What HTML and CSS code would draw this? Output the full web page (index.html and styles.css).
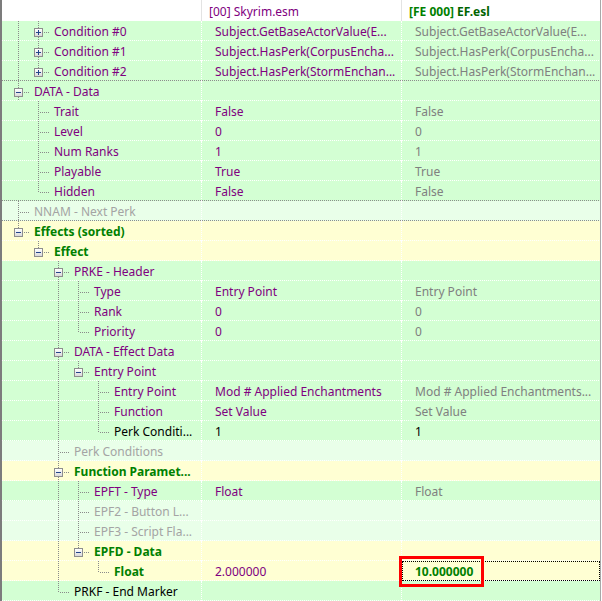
FILE: index.html
```html
<!DOCTYPE html>
<html>
<head>
<meta charset="utf-8">
<link rel="stylesheet" href="styles.css">
</head>
<body>
<div class="tree">
  <div class="head">
    <div class="hc c1"></div>
    <div class="hc c2 p">[00] Skyrim.esm</div>
    <div class="hc c3"><b class="gh1">[FE 000]</b> <b class="gh2">EF.esl</b></div>
  </div>

  <div class="row green">
    <div class="name"><i class="v"></i><i class="t"><i class="box plus"></i></i><span class="lbl p">Condition #0</span></div>
    <div class="val c2 p">Subject.GetBaseActorValue(E...</div>
    <div class="val gr">Subject.GetBaseActorValue(E...</div>
  </div>
  <div class="row green">
    <div class="name"><i class="v"></i><i class="t"><i class="box plus"></i></i><span class="lbl p">Condition #1</span></div>
    <div class="val c2 p">Subject.HasPerk(CorpusEncha...</div>
    <div class="val gr">Subject.HasPerk(CorpusEncha...</div>
  </div>
  <div class="row green sep">
    <div class="name"><i class="v"></i><i class="l"><i class="box plus"></i></i><span class="lbl p">Condition #2</span></div>
    <div class="val c2 p">Subject.HasPerk(StormEnchan...</div>
    <div class="val gr">Subject.HasPerk(StormEnchan...</div>
  </div>
  <div class="row green">
    <div class="name"><i class="t"><i class="box"></i></i><span class="lbl p">DATA - Data</span></div>
    <div class="val c2"></div>
    <div class="val"></div>
  </div>
  <div class="row green">
    <div class="name"><i class="e"></i><i class="t"></i><span class="lbl p">Trait</span></div>
    <div class="val c2 p">False</div>
    <div class="val gr">False</div>
  </div>
  <div class="row green">
    <div class="name"><i class="e"></i><i class="t"></i><span class="lbl p">Level</span></div>
    <div class="val c2 p">0</div>
    <div class="val gr">0</div>
  </div>
  <div class="row green">
    <div class="name"><i class="e"></i><i class="t"></i><span class="lbl p">Num Ranks</span></div>
    <div class="val c2 p">1</div>
    <div class="val gr">1</div>
  </div>
  <div class="row green">
    <div class="name"><i class="e"></i><i class="t"></i><span class="lbl p">Playable</span></div>
    <div class="val c2 p">True</div>
    <div class="val gr">True</div>
  </div>
  <div class="row green sep">
    <div class="name"><i class="e"></i><i class="l"></i><span class="lbl p">Hidden</span></div>
    <div class="val c2 p">False</div>
    <div class="val gr">False</div>
  </div>
  <div class="row light sep">
    <div class="name"><i class="t"></i><span class="lbl lt">NNAM - Next Perk</span></div>
    <div class="val c2"></div>
    <div class="val"></div>
  </div>
  <div class="row yellow">
    <div class="name"><i class="l"><i class="box"></i></i><span class="lbl bg">Effects (sorted)</span></div>
    <div class="val c2"></div>
    <div class="val"></div>
  </div>
  <div class="row yellow">
    <div class="name"><i class="e"></i><i class="l"><i class="box"></i></i><span class="lbl bg">Effect</span></div>
    <div class="val c2"></div>
    <div class="val"></div>
  </div>
  <div class="row green">
    <div class="name"><i class="e"></i><i class="e"></i><i class="t"><i class="box"></i></i><span class="lbl p">PRKE - Header</span></div>
    <div class="val c2"></div>
    <div class="val"></div>
  </div>
  <div class="row green">
    <div class="name"><i class="e"></i><i class="e"></i><i class="v"></i><i class="t"></i><span class="lbl p">Type</span></div>
    <div class="val c2 p">Entry Point</div>
    <div class="val gr">Entry Point</div>
  </div>
  <div class="row green">
    <div class="name"><i class="e"></i><i class="e"></i><i class="v"></i><i class="t"></i><span class="lbl p">Rank</span></div>
    <div class="val c2 p">0</div>
    <div class="val gr">0</div>
  </div>
  <div class="row green">
    <div class="name"><i class="e"></i><i class="e"></i><i class="v"></i><i class="l"></i><span class="lbl p">Priority</span></div>
    <div class="val c2 p">0</div>
    <div class="val gr">0</div>
  </div>
  <div class="row green">
    <div class="name"><i class="e"></i><i class="e"></i><i class="t"><i class="box"></i></i><span class="lbl p">DATA - Effect Data</span></div>
    <div class="val c2"></div>
    <div class="val"></div>
  </div>
  <div class="row green">
    <div class="name"><i class="e"></i><i class="e"></i><i class="v"></i><i class="l"><i class="box"></i></i><span class="lbl p">Entry Point</span></div>
    <div class="val c2"></div>
    <div class="val"></div>
  </div>
  <div class="row green">
    <div class="name"><i class="e"></i><i class="e"></i><i class="v"></i><i class="e"></i><i class="t"></i><span class="lbl p">Entry Point</span></div>
    <div class="val c2 p">Mod # Applied Enchantments</div>
    <div class="val gr">Mod # Applied Enchantments...</div>
  </div>
  <div class="row green">
    <div class="name"><i class="e"></i><i class="e"></i><i class="v"></i><i class="e"></i><i class="t"></i><span class="lbl p">Function</span></div>
    <div class="val c2 p">Set Value</div>
    <div class="val gr">Set Value</div>
  </div>
  <div class="row green">
    <div class="name"><i class="e"></i><i class="e"></i><i class="v"></i><i class="e"></i><i class="l"></i><span class="lbl k">Perk Conditi...</span></div>
    <div class="val c2 k">1</div>
    <div class="val k">1</div>
  </div>
  <div class="row light">
    <div class="name"><i class="e"></i><i class="e"></i><i class="t"></i><span class="lbl lt">Perk Conditions</span></div>
    <div class="val c2"></div>
    <div class="val"></div>
  </div>
  <div class="row yellow">
    <div class="name"><i class="e"></i><i class="e"></i><i class="t"><i class="box"></i></i><span class="lbl bg">Function Paramet...</span></div>
    <div class="val c2"></div>
    <div class="val"></div>
  </div>
  <div class="row green">
    <div class="name"><i class="e"></i><i class="e"></i><i class="v"></i><i class="t"></i><span class="lbl p">EPFT - Type</span></div>
    <div class="val c2 p">Float</div>
    <div class="val gr">Float</div>
  </div>
  <div class="row light">
    <div class="name"><i class="e"></i><i class="e"></i><i class="v"></i><i class="t"></i><span class="lbl lt">EPF2 - Button L...</span></div>
    <div class="val c2"></div>
    <div class="val"></div>
  </div>
  <div class="row light">
    <div class="name"><i class="e"></i><i class="e"></i><i class="v"></i><i class="t"></i><span class="lbl lt">EPF3 - Script Fla...</span></div>
    <div class="val c2"></div>
    <div class="val"></div>
  </div>
  <div class="row yellow">
    <div class="name"><i class="e"></i><i class="e"></i><i class="v"></i><i class="l"><i class="box"></i></i><span class="lbl bg">EPFD - Data</span></div>
    <div class="val c2"></div>
    <div class="val"></div>
  </div>
  <div class="row yellow">
    <div class="name"><i class="e"></i><i class="e"></i><i class="v"></i><i class="e"></i><i class="l"></i><span class="lbl bg">Float</span></div>
    <div class="val c2 p">2.000000</div>
    <div class="val bg focus">10.000000</div>
  </div>
  <div class="row green">
    <div class="name"><i class="e"></i><i class="e"></i><i class="l"></i><span class="lbl k">PRKF - End Marker</span></div>
    <div class="val c2"></div>
    <div class="val"></div>
  </div>

  <div class="mark"></div>
</div>
</body>
</html>
```

FILE: styles.css
```css
html, body {
  margin: 0;
  padding: 0;
  background: #fff;
}
body {
  font-family: "Noto Sans", "Liberation Sans", sans-serif;
  font-size: 12px;
}
.tree {
  position: relative;
  width: 601px;
  box-sizing: border-box;
  border-left: 2px solid #7c7c7c;
  border-right: 1px solid #a8a8a8;
  overflow: hidden;
}
.head {
  display: grid;
  grid-template-columns: 200px 200px 198px;
  height: 21px;
  background: #fff;
}
.hc {
  line-height: 21px;
  padding: 1px 0 0 7px;
  white-space: nowrap;
  overflow: hidden;
}
.hc.c1, .hc.c2 {
  border-right: 1px solid #e3e3e3;
}
.gh1 { color: #008000; }
.gh2 { color: #006400; }

.row {
  display: grid;
  grid-template-columns: 200px 200px 198px;
  height: 20px;
  background-image: repeating-linear-gradient(to right, #fff 0 1px, transparent 1px 2px);
  background-size: 100% 1px;
  background-position: 0 19px;
  background-repeat: no-repeat;
}
.row.sep {
  background-image: repeating-linear-gradient(to right, #8c8c8c 0 1px, transparent 1px 2px);
}
.green { background-color: #d3ffd3; }
.light { background-color: #e9ffe9; }
.yellow { background-color: #ffffd3; }

.name {
  display: flex;
  padding-left: 6px;
  border-right: 1px dotted #fff;
  overflow: hidden;
  white-space: nowrap;
}
.name i {
  display: block;
  height: 20px;
  flex: 0 0 auto;
}
.v, .e { width: 20px; }
.v {
  background: repeating-linear-gradient(to bottom, #8a8a8a 0 1px, transparent 1px 2px) 10px 0 / 1px 20px no-repeat;
}
.t, .l {
  width: 22px;
  box-sizing: border-box;
  padding: 7px 0 0 6px;
}
.t {
  background:
    repeating-linear-gradient(to right, #8a8a8a 0 1px, transparent 1px 2px) 12px 11px / 10px 1px no-repeat,
    repeating-linear-gradient(to bottom, #8a8a8a 0 1px, transparent 1px 2px) 10px 0 / 1px 20px no-repeat;
}
.l {
  background:
    repeating-linear-gradient(to right, #8a8a8a 0 1px, transparent 1px 2px) 12px 11px / 10px 1px no-repeat,
    repeating-linear-gradient(to bottom, #8a8a8a 0 1px, transparent 1px 2px) 10px 0 / 1px 12px no-repeat;
}
.name i.box {
  width: 9px;
  height: 9px;
  box-sizing: border-box;
  border: 1px solid #8e8e8e;
  background:
    linear-gradient(#23458a, #23458a) 1px 3px / 5px 1px no-repeat,
    linear-gradient(#ffffff, #d9d9d9);
}
.name i.box.plus {
  background:
    linear-gradient(#23458a, #23458a) 1px 3px / 5px 1px no-repeat,
    linear-gradient(#23458a, #23458a) 3px 1px / 1px 5px no-repeat,
    linear-gradient(#ffffff, #d9d9d9);
}
.lbl {
  margin-left: 4px;
  line-height: 20px;
  padding-top: 1px;
}
.val {
  padding-left: 13px;
  line-height: 20px;
  padding-top: 1px;
  box-sizing: border-box;
  height: 20px;
  white-space: nowrap;
  overflow: hidden;
}
.val.c2 {
  border-right: 1px dotted #fff;
}
.p { color: #800080; }
.gr { color: #808080; }
.lt { color: #a4a4a4; }
.k { color: #000; }
.bg { color: #008000; font-weight: bold; }
.focus {
  outline: 1px dotted #000;
  outline-offset: -1px;
}
.mark {
  position: absolute;
  left: 397px;
  top: 556px;
  width: 85px;
  height: 31px;
  box-sizing: border-box;
  border: 3px solid #f00;
}
```
